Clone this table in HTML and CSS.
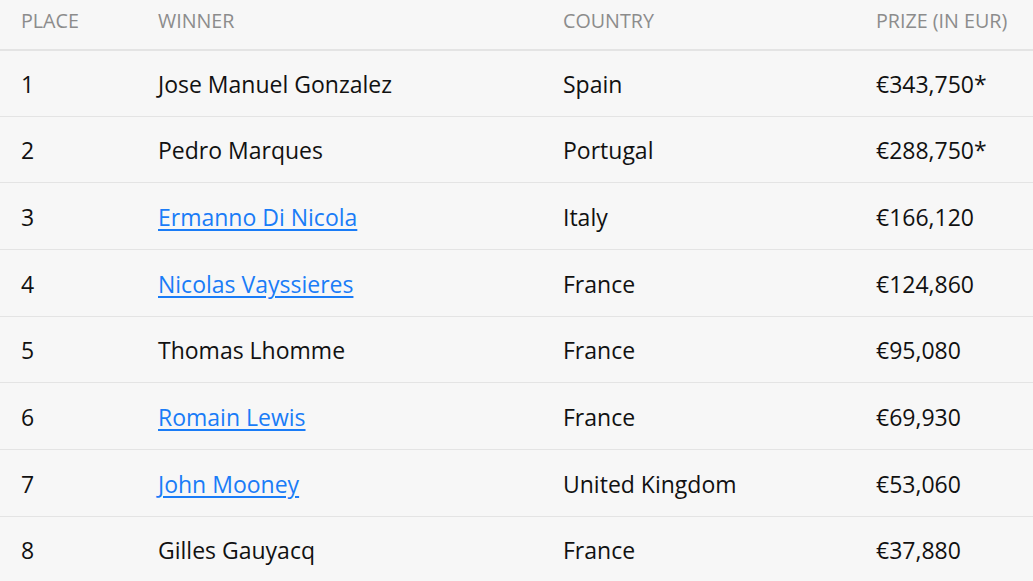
FILE: index.html
```html
<!DOCTYPE html>
<html lang="en">
<head>
<meta charset="utf-8">
<title>Results</title>
<link rel="stylesheet" href="styles.css">
</head>
<body>
<table class="results">
  <colgroup>
    <col class="c-place"><col class="c-winner"><col class="c-country"><col class="c-prize">
  </colgroup>
  <thead>
    <tr><th>Place</th><th>Winner</th><th>Country</th><th>Prize (in EUR)</th></tr>
  </thead>
  <tbody>
    <tr><td>1</td><td>Jose Manuel Gonzalez</td><td>Spain</td><td>€343,750*</td></tr>
    <tr><td>2</td><td>Pedro Marques</td><td>Portugal</td><td>€288,750*</td></tr>
    <tr><td>3</td><td><a href="#">Ermanno Di Nicola</a></td><td>Italy</td><td>€166,120</td></tr>
    <tr><td>4</td><td><a href="#">Nicolas Vayssieres</a></td><td>France</td><td>€124,860</td></tr>
    <tr><td>5</td><td>Thomas Lhomme</td><td>France</td><td>€95,080</td></tr>
    <tr><td>6</td><td><a href="#">Romain Lewis</a></td><td>France</td><td>€69,930</td></tr>
    <tr><td>7</td><td><a href="#">John Mooney</a></td><td>United Kingdom</td><td>€53,060</td></tr>
    <tr><td>8</td><td>Gilles Gauyacq</td><td>France</td><td>€37,880</td></tr>
  </tbody>
</table>
</body>
</html>
```
FILE: styles.css
```css
html, body {
  margin: 0;
  padding: 0;
  background: #f7f7f7;
}
body {
  font-family: "Open Sans", "Noto Sans", sans-serif;
  color: #111;
  overflow: hidden;
}
.results {
  width: 1033px;
  border-collapse: collapse;
  table-layout: fixed;
}
.c-place { width: 137px; }
.c-winner { width: 405px; }
.c-country { width: 313px; }
.c-prize { width: auto; }
.results th {
  height: 49.5px;
  box-sizing: border-box;
  padding: 7.5px 0 0 21px;
  text-align: left;
  font-weight: 400;
  font-size: 19.7px;
  line-height: 26px;
  text-transform: uppercase;
  color: #8c8c8c;
  border-bottom: 2px solid #e4e4e4;
  vertical-align: top;
  white-space: nowrap;
}
.results td {
  height: 66.67px;
  box-sizing: border-box;
  padding: 2px 0 0 21px;
  font-size: 23px;
  border-bottom: 1px solid #e4e4e4;
  vertical-align: middle;
  white-space: nowrap;
}
.results a {
  color: #1a7cf7;
  text-decoration: underline;
  text-decoration-thickness: 2px;
  text-underline-offset: 3px;
}
```
